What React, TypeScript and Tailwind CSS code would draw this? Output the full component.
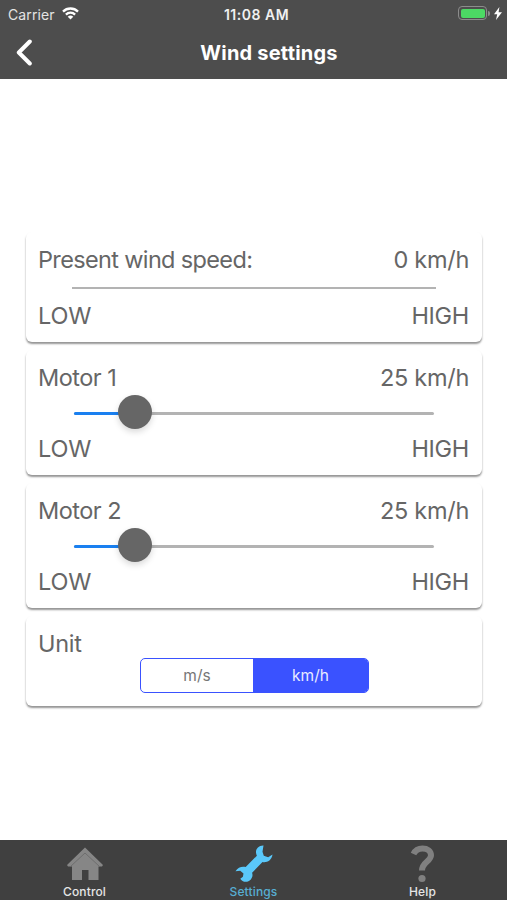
import type { ReactNode } from "react";
import clsx from "clsx";

const motors = [
  { name: "Motor 1", speed: 25, percent: 17 },
  { name: "Motor 2", speed: 25, percent: 17 },
];

function StatusBar() {
  return (
    <div className="grid h-7 grid-cols-3 items-center pl-2 pr-[5px] text-[14px] text-[#e4e4e4]">
      <div className="flex items-center gap-[7px]">
        <span className="tracking-[0.1px]">Carrier</span>
        <svg className="-mt-0.5" width="17" height="13" viewBox="0 0 17 13" fill="none" stroke="#fff" strokeWidth="2.3">
          <path d="M1 4.600a10.600 10.600 0 0 1 15 0" />
          <path d="M3.900 7.600a6.500 6.500 0 0 1 9.200 0" />
          <path d="M8.500 12.600 5.700 9.800a4 4 0 0 1 5.600 0z" fill="#fff" stroke="none" />
        </svg>
      </div>
      <span className="pl-[3px] text-center font-semibold tracking-[0.5px] text-[#f0f0f0]">11:08 AM</span>
      <div className="flex items-center justify-end pb-[2px]">
        <div className="h-[14px] w-[29px] rounded-[4px] border border-[#8c8c8c] p-[1.5px]">
          <div className="h-full rounded-[2px] bg-[#4cd964]" />
        </div>
        <div className="ml-px h-[5px] w-[2px] rounded-r-full bg-[#8c8c8c]" />
        <svg className="ml-1" width="8" height="13" viewBox="0 0 8 13" fill="#fff">
          <path d="M5.400 0 0 7.200h3.200L2 13l6-7.800H4.600z" />
        </svg>
      </div>
    </div>
  );
}

function Header() {
  return (
    <header className="h-[79px] shrink-0 bg-[#4d4d4d]">
      <StatusBar />
      <div className="grid h-[49px] grid-cols-[60px_1fr_60px] items-center">
        <button className="pl-4">
          <svg width="17" height="27" viewBox="0 0 17 27" fill="none" stroke="#fff" strokeWidth="4">
            <path d="M13.800 2.500 2.800 13.500l11 11" strokeLinecap="round" strokeLinejoin="round" />
          </svg>
        </button>
        <h1 className="pl-[31px] text-center text-[20px] font-bold tracking-[0.2px] text-white">
          Wind settings
        </h1>
      </div>
    </header>
  );
}

function Card({ children, className }: { children: ReactNode; className?: string }) {
  return (
    <section
      className={clsx(
        "rounded-[6px] bg-white pt-[14px] pr-[13px] pl-3 shadow-[0_2px_2px_rgba(0,0,0,0.42)]",
        className
      )}
    >
      {children}
    </section>
  );
}

function Row({ left, right, className }: { left: string; right?: string; className?: string }) {
  return (
    <div
      className={clsx(
        "flex h-7 items-center justify-between text-[23.5px] whitespace-nowrap text-[#666]",
        className
      )}
    >
      <span>{left}</span>
      <span className="tracking-[-0.3px]">{right}</span>
    </div>
  );
}

function Slider({ percent }: { percent: number }) {
  return (
    <div className="relative mr-[35px] ml-9 flex h-[43px] items-center">
      <div className="h-[2.5px] w-full rounded-full bg-[#b3b3b3]">
        <div className="h-full rounded-full bg-[#1a80f0]" style={{ width: `${percent}%` }} />
      </div>
      <div
        className="absolute top-[3px] size-[34px] -translate-x-1/2 rounded-full bg-[#666] shadow-[0_3px_6px_rgba(0,0,0,0.15)]"
        style={{ left: `${percent}%` }}
      />
    </div>
  );
}

function HomeIcon() {
  return (
    <svg width="36" height="34" viewBox="0 0 36 34" fill="#868686">
      <path d="M18 0.500 36 18l-1 1.500h-3.500V33h-10V23h-6.500v10h-10V19.500H1L0 18z" />
      <path d="M3.500 19.500 18 6l14.500 13.500" fill="none" stroke="#6b6b6b" strokeWidth="0.900" />
    </svg>
  );
}

function WrenchIcon() {
  return (
    <svg width="38" height="38" viewBox="0 0 38 38" fill="#5ac8fa">
      <path d="M28.500 0.500C24 0.300 20.800 3.500 21 7.500c.1 1.300.4 2.300.9 3.200L10.700 22c-3.700-1-7.700.2-10.200 4.200l4.700-.4 3.300 2.700-.6 3.200-2.600 2c2 3.800 7.500 4.300 10.500.8 1.700-2 2.100-4.300 1.300-6.800L27.500 17c4 .8 9-1 10-7.500l-4.300 2.700-4.400-1.400-1.300-4z" />
    </svg>
  );
}

function HelpIcon() {
  return (
    <svg width="26" height="38" viewBox="0 0 26 38">
      <path
        d="M3.500 9C5.300 5.200 8.500 3.500 12.500 3.500c5 0 8.500 2.500 8.500 6.800 0 6.200-9 6.500-9 15.200"
        fill="none"
        stroke="#808080"
        strokeWidth="6"
      />
      <circle cx="12" cy="33.500" r="3.600" fill="#808080" />
    </svg>
  );
}

const tabs = [
  { label: "Control", icon: <HomeIcon />, active: false },
  { label: "Settings", icon: <WrenchIcon />, active: true },
  { label: "Help", icon: <HelpIcon />, active: false },
];

function TabBar() {
  return (
    <nav className="grid h-[60px] shrink-0 grid-cols-3 bg-[#404040]">
      {tabs.map((tab) => (
        <button key={tab.label} className="flex flex-col items-center pt-1">
          <span className="flex h-[39px] items-center justify-center">{tab.icon}</span>
          <span
            className={clsx(
              "mt-px text-[12px] leading-[16px] font-medium tracking-[0.15px]",
              tab.active ? "text-[#57aed2]" : "text-[#e6e6e6]"
            )}
          >
            {tab.label}
          </span>
        </button>
      ))}
    </nav>
  );
}

export default function App() {
  return (
    <div className="flex h-[900px] w-[507px] flex-col overflow-hidden bg-white font-['Inter',sans-serif]">
      <Header />

      <main className="flex flex-1 flex-col gap-2 pt-[153px] pr-[25px] pl-[26px]">
        <Card className="h-[110px]">
          <Row left="Present wind speed:" right="0 km/h" className="tracking-[-0.65px]" />
          <div className="mr-[33px] ml-[34px] mt-[13px] mb-[13px] h-[2px] bg-[#b3b3b3]" />
          <Row left="LOW" right="HIGH" className="tracking-[-0.2px]" />
        </Card>

        {motors.map((motor) => (
          <Card key={motor.name} className="h-[125px]">
            <Row left={motor.name} right={`${motor.speed} km/h`} className="tracking-[-0.5px]" />
            <Slider percent={motor.percent} />
            <Row left="LOW" right="HIGH" className="tracking-[-0.2px]" />
          </Card>
        ))}

        <Card className="h-[90px]">
          <Row left="Unit" className="tracking-[-0.3px]" />
          <div className="ml-[102px] grid h-[35px] w-[229px] grid-cols-[112px_1fr] overflow-hidden rounded-[5px] border border-[#3a52ff] text-[15.5px]">
            <button className="text-[#777]">m/s</button>
            <button className="bg-[#3a52ff] text-[#e8eaff]">km/h</button>
          </div>
        </Card>
      </main>

      <TabBar />
    </div>
  );
}
